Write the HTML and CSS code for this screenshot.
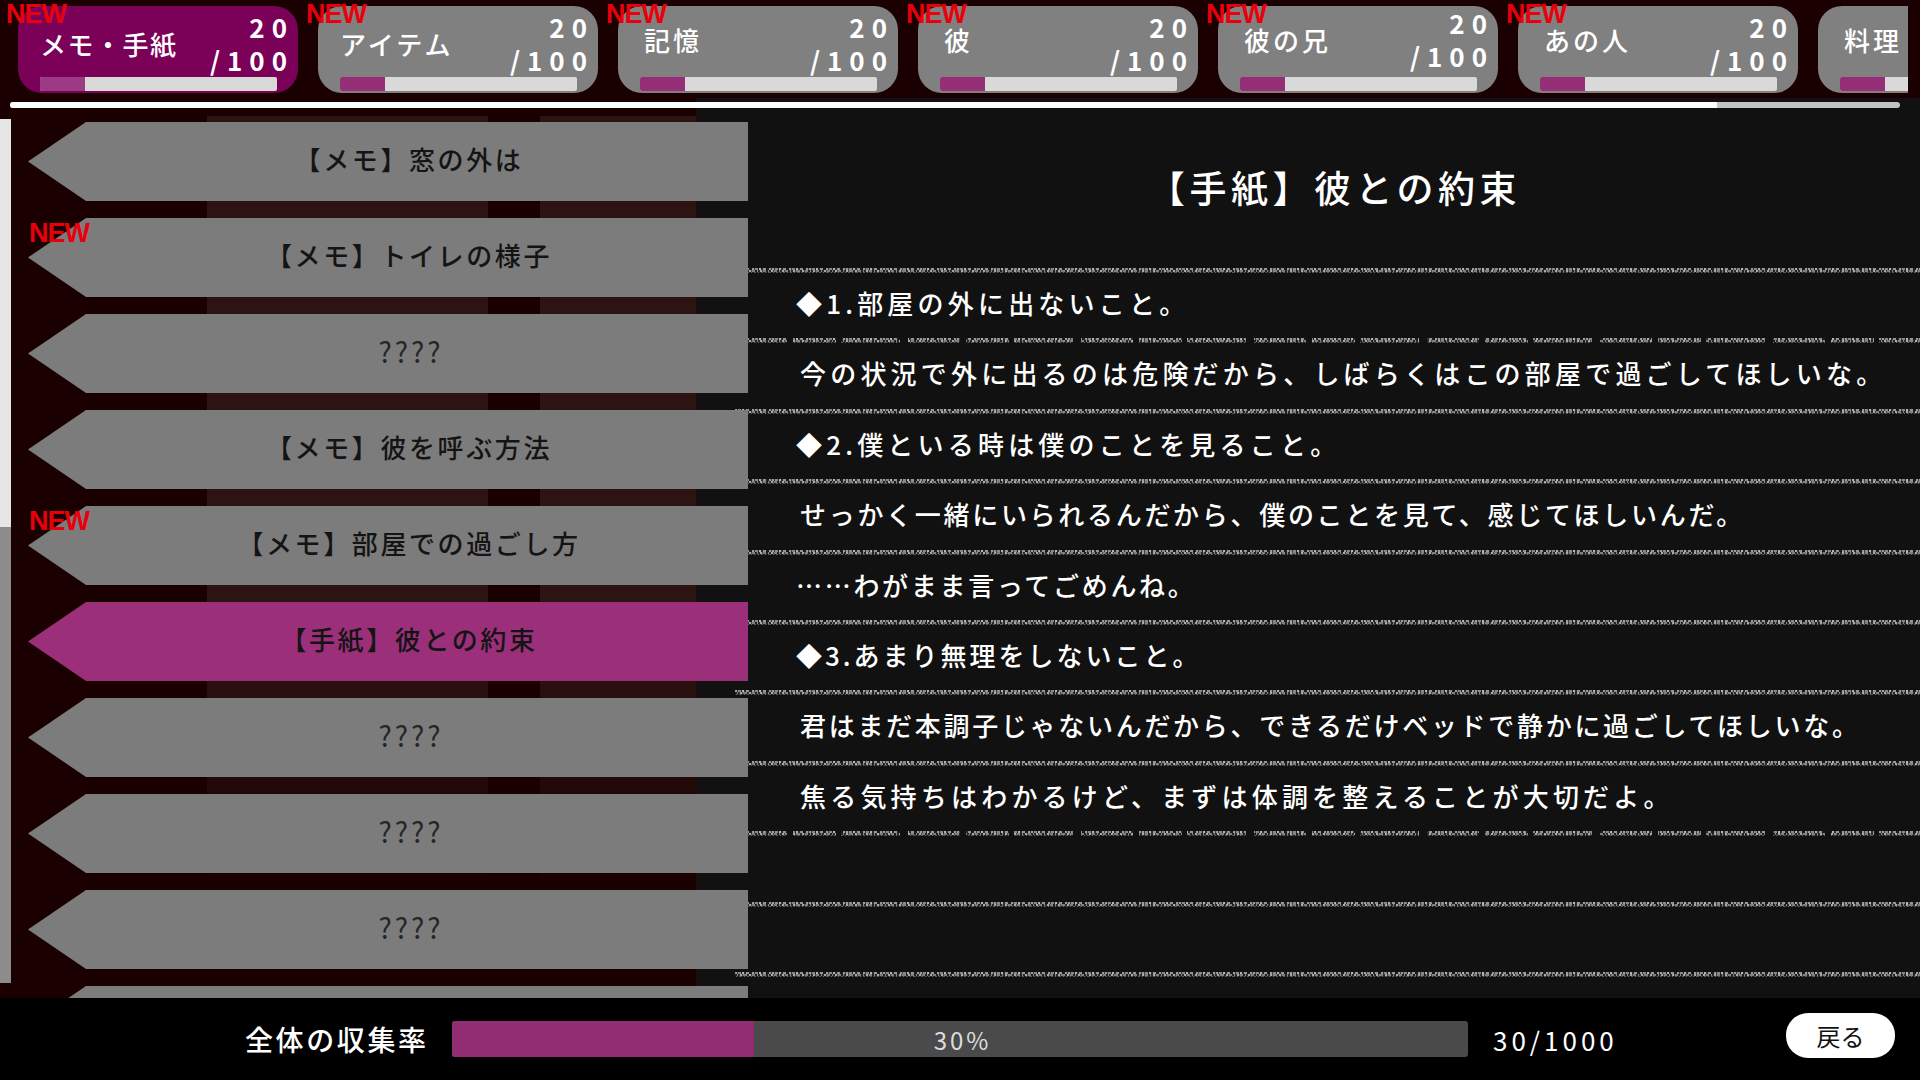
FILE: index.html
```html
<!DOCTYPE html>
<html lang="ja">
<head>
<meta charset="utf-8">
<title>全体の収集率</title>
<link rel="stylesheet" href="styles.css">
</head>
<body>
<div class="app">
  <header class="top">
    <nav class="tabs">
      <div class="tab tab--active"><span class="new new--tab">NEW</span>
        <div class="tab-head"><span class="tab-label">メモ・手紙</span><span class="tab-count">20<br>/100</span></div>
        <div class="tab-bar"><i class="tab-fill" style="width:19%"></i></div></div>
      <div class="tab"><span class="new new--tab">NEW</span>
        <div class="tab-head"><span class="tab-label">アイテム</span><span class="tab-count">20<br>/100</span></div>
        <div class="tab-bar"><i class="tab-fill" style="width:19%"></i></div></div>
      <div class="tab tab--up"><span class="new new--tab">NEW</span>
        <div class="tab-head"><span class="tab-label">記憶</span><span class="tab-count">20<br>/100</span></div>
        <div class="tab-bar"><i class="tab-fill" style="width:19%"></i></div></div>
      <div class="tab tab--up"><span class="new new--tab">NEW</span>
        <div class="tab-head"><span class="tab-label">彼</span><span class="tab-count">20<br>/100</span></div>
        <div class="tab-bar"><i class="tab-fill" style="width:19%"></i></div></div>
      <div class="tab tab--up tab--upcount"><span class="new new--tab">NEW</span>
        <div class="tab-head"><span class="tab-label">彼の兄</span><span class="tab-count">20<br>/100</span></div>
        <div class="tab-bar"><i class="tab-fill" style="width:19%"></i></div></div>
      <div class="tab tab--up"><span class="new new--tab">NEW</span>
        <div class="tab-head"><span class="tab-label">あの人</span><span class="tab-count">20<br>/100</span></div>
        <div class="tab-bar"><i class="tab-fill" style="width:19%"></i></div></div>
      <div class="tab tab--up">
        <div class="tab-head"><span class="tab-label">料理</span></div>
        <div class="tab-bar"><i class="tab-fill" style="width:19%"></i></div></div>
    </nav>
    <div class="hscroll"><i class="hscroll-thumb"></i></div>
  </header>

  <main class="main">
    <aside class="side">
      <div class="vscroll"><i class="vscroll-thumb"></i></div>
      <ul class="list">
        <li class="item"><span class="item-text">【メモ】窓の外は</span></li>
        <li class="item"><span class="new new--item">NEW</span><span class="item-text">【メモ】トイレの様子</span></li>
        <li class="item item--locked"><span class="item-text">????</span></li>
        <li class="item"><span class="item-text">【メモ】彼を呼ぶ方法</span></li>
        <li class="item"><span class="new new--item">NEW</span><span class="item-text">【メモ】部屋での過ごし方</span></li>
        <li class="item item--active"><span class="item-text">【手紙】彼との約束</span></li>
        <li class="item item--locked"><span class="item-text">????</span></li>
        <li class="item item--locked"><span class="item-text">????</span></li>
        <li class="item item--locked"><span class="item-text">????</span></li>
        <li class="item item--locked"></li>
      </ul>
    </aside>
    <article class="panel">
      <h1 class="panel-title">【手紙】彼との約束</h1>
      <div class="sheet">
        <p class="row row--mark row--loose">◆1.部屋の外に出ないこと。</p>
        <p class="row row--gap row--loose">今の状況で外に出るのは危険だから、しばらくはこの部屋で過ごしてほしいな。</p>
        <p class="row row--mark row--loose">◆2.僕といる時は僕のことを見ること。</p>
        <p class="row row--tight">せっかく一緒にいられるんだから、僕のことを見て、感じてほしいんだ。</p>
        <p class="row row--mark row--tight">……わがまま言ってごめんね。</p>
        <p class="row row--mark">◆3.あまり無理をしないこと。</p>
        <p class="row row--tight">君はまだ本調子じゃないんだから、できるだけベッドで静かに過ごしてほしいな。</p>
        <p class="row row--loose">焦る気持ちはわかるけど、まずは体調を整えることが大切だよ。</p>
        <p class="row row--gap"></p>
        <p class="row"></p>
        <p class="row"></p>
      </div>
    </article>
  </main>

  <footer class="bottom">
    <span class="total-label">全体の収集率</span>
    <div class="total-bar"><i class="total-fill" style="width:29.7%"></i><span class="total-pct">30%</span></div>
    <span class="total-count">30/1000</span>
    <button class="back">戻る</button>
  </footer>
</div>
</body>
</html>
```

FILE: styles.css
```css
* { box-sizing: border-box; }
html, body { margin: 0; padding: 0; background: #000; }
body { font-family: "Noto Sans CJK JP", "Noto Sans", sans-serif; color: #fff; overflow: hidden; }
ul, p, h1 { margin: 0; padding: 0; list-style: none; font-weight: 500; }
i { display: block; }
.app { width: 1920px; height: 1080px; display: flex; flex-direction: column; }

/* top */
.top {
  height: 116px; flex: none;
  background: linear-gradient(#1a0000 98px, transparent 98px), linear-gradient(90deg, #1a0000 696px, #111 696px);
}
.tabs { width: 1908px; height: 97px; padding: 6px 0 0 18px; display: flex; gap: 20px; overflow: hidden; }
.tab {
  position: relative; flex: none; width: 280px; height: 87px; padding: 0 8px 2px 22px;
  display: flex; flex-direction: column; background: #808080; border-radius: 24px;
}
.tab--active { background: #7a0058; }
.tab--active .tab-fill { background: #9c3a84; }
.tab-head { flex: 1; display: flex; justify-content: space-between; }
.tab-label { font-size: 26px; font-weight: 500; line-height: 30px; margin-top: 23px; letter-spacing: 3px; white-space: nowrap; }
.tab--active .tab-label { letter-spacing: 1.5px; }
.tab--up .tab-label { margin: 19px 0 0 4px; }
.tab-count { font-size: 26px; line-height: 33px; font-weight: 700; letter-spacing: 7px; text-align: right; padding-top: 4px; margin-right: -4px; }
.tab--upcount .tab-count { padding-top: 0; }
.tab-bar { width: 237px; height: 14px; background: #d9d9d9; border-radius: 2px; overflow: hidden; }
.tab-fill { height: 100%; background: #962e78; }

.new { position: absolute; z-index: 3; color: #e8000c; font-family: "Liberation Sans", sans-serif; font-weight: 700; font-size: 27px; line-height: 22px; letter-spacing: -1px; }
.new--tab { left: -12px; top: -3px; }
.new--item { left: 1px; top: 4px; }

.hscroll { width: 1890px; height: 6px; margin: 5px 0 0 10px; background: #c4c4c4; border-radius: 3px; overflow: hidden; }
.hscroll-thumb { width: 1707px; height: 100%; background: #fff; }

/* middle */
.main { height: 882px; flex: none; display: flex; overflow: hidden; }
.side {
  position: relative; z-index: 2; width: 696px; flex: none; display: flex;
  background:
    linear-gradient(rgba(26,0,0,0) 60%, #1a0000 88%),
    linear-gradient(90deg, #1a0000 207px, #2d1412 207px 488px, #1a0000 488px 540px, #2d1412 540px);
}
.vscroll { width: 11px; height: 864px; margin-top: 3px; flex: none; background: #8c8c8c; }
.vscroll-thumb { height: 408px; background: #e6e6e6; }
.list { width: 720px; margin: 6px 0 0 17px; flex: none; display: flex; flex-direction: column; gap: 17px; }
.item {
  position: relative; flex: none; height: 79px; padding: 0 0 6px 42px;
  display: flex; align-items: center; justify-content: center;
  color: #141414; font-size: 26px; font-weight: 500; letter-spacing: 2.6px; white-space: nowrap;
}
.item::before {
  content: ""; position: absolute; inset: 0; background: #7c7c7c;
  clip-path: polygon(0 50%, 58px 0, 100% 0, 100% 100%, 58px 100%);
}
.item--active::before { background: #9b2f7a; }
.item-text { position: relative; }
.item--locked { padding-left: 46px; letter-spacing: 3px; color: #262626; font-size: 28px; font-weight: 400; }

.panel { flex: 1; min-width: 0; background: #111; display: flex; flex-direction: column; }
.panel-title { flex: none; height: 152px; padding-left: 53px; font-size: 37px; line-height: 143px; letter-spacing: 4.5px; text-align: center; overflow: hidden; white-space: nowrap; }
.sheet { flex: none; margin-left: 39px; display: flex; flex-direction: column; }
.row {
  flex: none; height: 70.4px; padding-left: 65px; font-size: 26px; line-height: 59px; letter-spacing: 3px; white-space: nowrap;
}
.row::before {
  content: ""; display: block; height: 5px; filter: blur(0.55px);
  background-repeat: repeat-x;
  background-size: 37px 2px, 53px 2px, 29px 1px;
  background-position: 0 0, 11px 2px, 5px 4px;
  background-image:
    repeating-linear-gradient(90deg, #9c9c9c 0 2px, #3a3a3a 2px 3px, #888 3px 6px, #1c1c1c 6px 7px, #b4b4b4 7px 9px, #2c2c2c 9px 11px, #959595 11px 14px, #1a1a1a 14px 17px),
    repeating-linear-gradient(90deg, #868686 0 1px, #2a2a2a 1px 3px, #a8a8a8 3px 5px, #444 5px 6px, #808080 6px 9px, #222 9px 11px),
    repeating-linear-gradient(90deg, #555 0 2px, #1c1c1c 2px 4px, #666 4px 5px, #1e1e1e 5px 7px);
  margin-left: -65px;
}
.row--mark { padding-left: 61px; }
.row--mark::before { margin-left: -61px; }
.row--loose { letter-spacing: 4.2px; }
.row--tight { letter-spacing: 2.7px; }
.row--gap::before {
  background-size: 173px 5px, 37px 2px, 53px 2px, 29px 1px;
  background-position: 0 0, 0 0, 11px 2px, 5px 4px;
  background-image:
    repeating-linear-gradient(90deg, transparent 0 52px, #111 52px 58px, transparent 58px 101px, #111 101px 106px, transparent 106px 165px, #111 165px 173px),
    repeating-linear-gradient(90deg, #9c9c9c 0 2px, #3a3a3a 2px 3px, #888 3px 6px, #1c1c1c 6px 7px, #b4b4b4 7px 9px, #2c2c2c 9px 11px, #959595 11px 14px, #1a1a1a 14px 17px),
    repeating-linear-gradient(90deg, #868686 0 1px, #2a2a2a 1px 3px, #a8a8a8 3px 5px, #444 5px 6px, #808080 6px 9px, #222 9px 11px),
    repeating-linear-gradient(90deg, #555 0 2px, #1c1c1c 2px 4px, #666 4px 5px, #1e1e1e 5px 7px);
}

/* bottom */
.bottom { flex: 1; background: #000; display: flex; align-items: center; padding: 0 25px 0 245px; }
.total-label { font-size: 28px; font-weight: 500; letter-spacing: 2.6px; width: 207px; flex: none; white-space: nowrap; }
.total-bar { position: relative; width: 1016px; height: 36px; flex: none; background: #4a4a4a; border-radius: 3px; overflow: hidden; display: flex; align-items: center; justify-content: center; }
.total-fill { position: absolute; left: 0; top: 0; height: 100%; background: #922d74; }
.total-pct { position: relative; padding-left: 5px; font-size: 24px; letter-spacing: 3px; color: #ddd; }
.total-count { margin-left: 25px; font-size: 26px; letter-spacing: 4px; }
.back {
  margin: 0 0 7px auto; width: 109px; height: 45px; border: 0; border-radius: 22px; background: #fff; color: #111;
  font-family: inherit; font-size: 24px; line-height: 45px; padding: 0;
}
```
